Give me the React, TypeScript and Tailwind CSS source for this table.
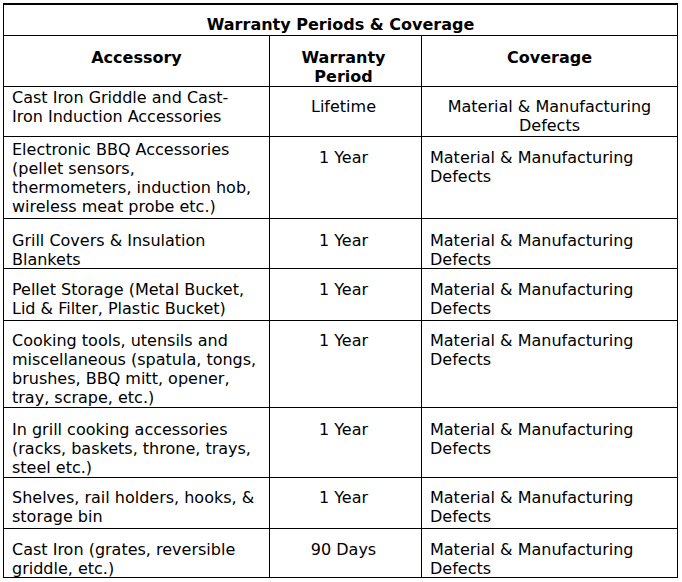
const rows = [
  { acc: ["Cast Iron Griddle and Cast-", "Iron Induction Accessories"], period: "Lifetime", h: "h-[50px]", pt: "pt-[1px]", pt2: "pt-[10px]", centerCov: true },
  { acc: ["Electronic BBQ Accessories", "(pellet sensors,", "thermometers, induction hob,", "wireless meat probe etc.)"], period: "1 Year", h: "h-[82px]", pt: "pt-[3px]", pt2: "pt-[11px]" },
  { acc: ["Grill Covers & Insulation", "Blankets"], period: "1 Year", h: "h-[50px]", pt: "pt-[12px]", pt2: "pt-[12px]" },
  { acc: ["Pellet Storage (Metal Bucket,", "Lid & Filter, Plastic Bucket)"], period: "1 Year", h: "h-[52px]", pt: "pt-[11px]", pt2: "pt-[11px]" },
  { acc: ["Cooking tools, utensils and", "miscellaneous (spatula, tongs,", "brushes, BBQ mitt, opener,", "tray, scrape, etc.)"], period: "1 Year", h: "h-[87px]", pt: "pt-[10px]", pt2: "pt-[10px]" },
  { acc: ["In grill cooking accessories", "(racks, baskets, throne, trays,", "steel etc.)"], period: "1 Year", h: "h-[70px]", pt: "pt-[12px]", pt2: "pt-[12px]" },
  { acc: ["Shelves, rail holders, hooks, &", "storage bin"], period: "1 Year", h: "h-[51px]", pt: "pt-[10px]", pt2: "pt-[10px]" },
  { acc: ["Cast Iron (grates, reversible", "griddle, etc.)"], period: "90 Days", h: "h-[49px]", pt: "pt-[11px]", pt2: "pt-[11px]" },
];

export default function App() {
  return (
    <div className="min-h-screen bg-white pl-[3px] pt-[3px] font-['DejaVu_Sans',Verdana,sans-serif] text-[16px] leading-[19px] text-black">
      <div className="w-[675px] border-x border-t-2 border-black">
        <div className="h-[31px] border-b border-black pt-[10px] text-center font-bold">
          Warranty Periods &amp; Coverage
        </div>

        <div className="grid h-[51px] grid-cols-[266px_152px_255px] border-b border-black font-bold">
          <div className="border-r border-black pt-[12px] text-center">Accessory</div>
          <div className="border-r border-black pt-[12px] pr-[4px] text-center">
            Warranty
            <br />
            Period
          </div>
          <div className="pt-[12px] text-center">Coverage</div>
        </div>

        {rows.map((r, i) => (
          <div key={i} className={`grid grid-cols-[266px_152px_255px] border-b border-black ${r.h}`}>
            <div className={`whitespace-nowrap border-r border-black pl-[8px] ${r.pt}`}>
              {r.acc.map((line, j) => (
                <div key={j}>{line}</div>
              ))}
            </div>
            <div className={`border-r border-black pr-[4px] text-center ${r.pt2}`}>{r.period}</div>
            {r.centerCov ? (
              <div className={`text-center ${r.pt2}`}>
                Material &amp; Manufacturing
                <br />
                Defects
              </div>
            ) : (
              <div className={`pl-[8px] ${r.pt2}`}>
                Material &amp; Manufacturing
                <br />
                Defects
              </div>
            )}
          </div>
        ))}
      </div>
    </div>
  );
}
